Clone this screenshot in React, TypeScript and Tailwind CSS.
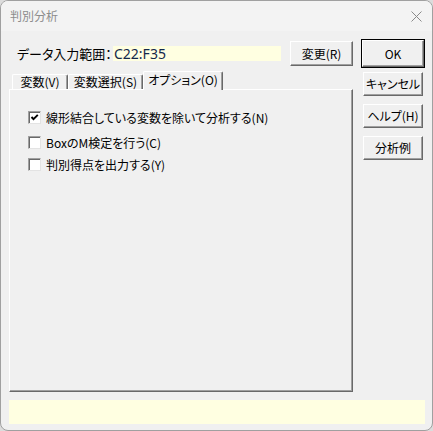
import React from "react";

const jp = "font-['Noto_Sans_CJK_JP',sans-serif] [font-feature-settings:'palt']";

function Btn({ children, className = "" }: { children: React.ReactNode; className?: string }) {
  return (
    <div
      className={`flex items-center justify-center whitespace-nowrap bg-[#f0f0f0] border-t border-l border-white border-r border-b border-r-[#696969] border-b-[#696969] shadow-[inset_-1px_-1px_0_#a0a0a0] text-[12px] leading-none text-black ${jp} ${className}`}
    >
      {children}
    </div>
  );
}

function Check({ checked }: { checked?: boolean }) {
  return (
    <div className="w-[13px] h-[13px] bg-white border-t border-l border-[#a0a0a0] border-r border-b border-r-[#e3e3e3] border-b-[#e3e3e3] shadow-[inset_1px_1px_0_#696969] flex items-center justify-center">
      {checked && (
        <svg width="11" height="11" viewBox="0 0 11 11">
          <polyline points="2.5,5 4.5,7.2 8.8,2.8" fill="none" stroke="#000" strokeWidth="1.9" />
        </svg>
      )}
    </div>
  );
}

function Tab({ label, w, selected }: { label: string; w: string; selected?: boolean }) {
  return (
    <div
      className={`${w} ${
        selected ? "h-[19px] -mb-px z-10 pb-[3px]" : "h-[15px]"
      } relative flex items-center justify-center whitespace-nowrap bg-[#f0f0f0] border-t border-l border-white border-r border-r-[#696969] rounded-t-[2px] shadow-[inset_-1px_0_0_#a0a0a0] text-[12px] leading-none text-black ${jp}`}
    >
      {label}
    </div>
  );
}

export default function App() {
  return (
    <div className="w-[433px] h-[431px] bg-[#dcdcdc]">
      <div className="w-[433px] h-[431px] rounded-[8px] border border-[#a0a0a0] bg-[#f0f0f0] overflow-hidden flex flex-col">
        <div className="h-[30px] bg-[#f3f3f3] flex items-center justify-between pl-[9px] pr-[10px]">
          <span className={`text-[12px] text-[#8c8c8c] ${jp}`}>判別分析</span>
          <svg width="11" height="11" viewBox="0 0 11 11">
            <path d="M0.5 0.5 L10.5 10.5 M10.5 0.5 L0.5 10.5" stroke="#8a8a8a" strokeWidth="1" />
          </svg>
        </div>
        <div className="flex pl-[8px] pt-[8px]">
          <div className="w-[344px] flex flex-col">
            <div className="mt-[2px] h-[25px] flex items-center">
              <span className={`ml-[8px] text-[13px] text-black ${jp}`}>データ入力範囲：</span>
              <div className="ml-auto mr-[72px] w-[168px] h-[15px] bg-[#ffffe1] flex items-center">
                <span className="font-['Noto_Sans',sans-serif] text-[14px] leading-none text-[#14284b] pl-[1px] pt-[1px]">C22:F35</span>
              </div>
            </div>
            <div className="mt-[-25px] ml-auto h-[25px] w-[63px]">
              <Btn className="w-[63px] h-[25px]">変更(R)</Btn>
            </div>
            <div className="mt-[5px] h-[18px] flex items-end pl-[3px]">
              <Tab label="変数(V)" w="w-[56px]" />
              <Tab label="変数選択(S)" w="w-[75px]" />
              <Tab label="オプション(O)" w="w-[80px]" selected />
            </div>
            <div className="h-[303px] bg-[#f0f0f0] border-t border-l border-white border-r border-b border-r-[#696969] border-b-[#696969] shadow-[inset_-1px_-1px_0_#a0a0a0] flex flex-col pl-[18px]">
              <div className="mt-[21px] h-[13px] flex items-center">
                <Check checked />
                <span className={`ml-[5px] text-[12px] leading-none text-black ${jp}`}>線形結合している変数を除いて分析する(N)</span>
              </div>
              <div className="mt-[12px] h-[13px] flex items-center">
                <Check />
                <span className={`ml-[5px] text-[12px] leading-none text-black ${jp}`}>BoxのM検定を行う(C)</span>
              </div>
              <div className="mt-[9px] h-[13px] flex items-center">
                <Check />
                <span className={`ml-[5px] text-[12px] leading-none text-black ${jp}`}>判別得点を出力する(Y)</span>
              </div>
            </div>
          </div>
          <div className="ml-[8px] w-[64px] flex flex-col">
            <div className="h-[29px] w-[64px] border border-black">
              <Btn className="w-full h-full">OK</Btn>
            </div>
            <Btn className="mt-[4px] ml-[2px] w-[60px] h-[24px]">キャンセル</Btn>
            <Btn className="mt-[8px] ml-[2px] w-[60px] h-[24px]">ヘルプ(H)</Btn>
            <Btn className="mt-[8px] ml-[2px] w-[60px] h-[24px]">分析例</Btn>
          </div>
        </div>
        <div className="mt-[8px] ml-[8px] w-[416px] h-[24px] bg-[#ffffe1]" />
      </div>
    </div>
  );
}
